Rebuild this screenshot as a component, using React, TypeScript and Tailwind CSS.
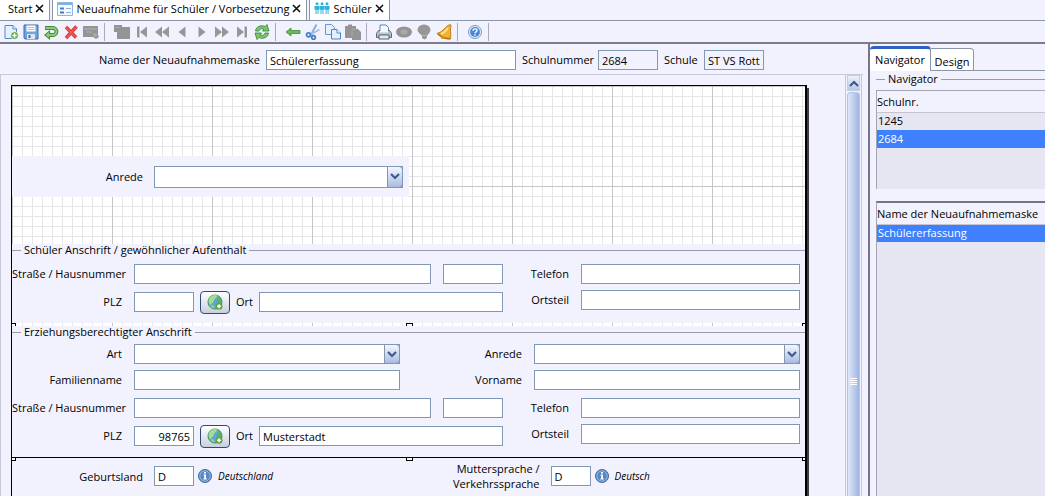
import { useState, type ReactNode } from 'react'

const fieldClass = 'min-w-0 border border-[#8098b4] px-[3px] text-black outline-none'

export default function App() {
  return (
    <div className="flex h-screen flex-col overflow-hidden bg-[#f2f2fe] font-['Open_Sans','Noto_Sans',sans-serif] text-[11px] leading-4 text-black">
      <WindowTabs />
      <Toolbar />
      <div className="flex min-h-0 flex-1">
        <main className="mr-[5px] flex min-w-0 flex-1 flex-col">
          <MaskHeader />
          <div className="flex min-h-0 flex-1 border-t border-l border-[#c9c9dc]">
            <div className="flex min-w-0 flex-1 overflow-hidden pt-[10px] pr-9 pl-[10px]">
              <MaskCanvas />
            </div>
            <ScrollBar />
          </div>
        </main>
        <SidePanel />
      </div>
    </div>
  )
}

function WindowTabs() {
  return (
    <nav className="flex h-[21px] shrink-0 gap-[2px] border-b border-[#8a96a8]">
      <WindowTab label="Start" />
      <WindowTab label="Neuaufnahme für Schüler / Vorbesetzung" icon={<FormIcon />} />
      <WindowTab label="Schüler" icon={<PeopleIcon />} />
    </nav>
  )
}

function WindowTab({ label, icon }: { label: string; icon?: ReactNode }) {
  return (
    <div
      className={`flex items-center gap-[3px] border-r border-[#8a96a8] bg-white pr-[5px] pb-[3px] ${
        icon ? 'border-l pl-1' : 'pl-2'
      }`}
    >
      {icon}
      <button type="button" className="whitespace-nowrap">
        {label}
      </button>
      <button type="button" aria-label={`${label} schließen`}>
        <svg width="9" height="9" viewBox="0 0 9 9" stroke="#111" strokeWidth="1.6">
          <path d="M1 1L8 8M8 1L1 8" />
        </svg>
      </button>
    </div>
  )
}

function Toolbar() {
  return (
    <div className="flex h-[23px] shrink-0 items-center border-b-2 border-[#7c7c8c] pl-px">
      <Tool label="Neu">
        <path d="M2 1.5h8l3.5 3.5v9.500h-11.500z" fill="#e4f1fd" stroke="#4a8ac9" />
        <path d="M10 1.500v3.500h3.500" fill="#fff" stroke="#4a8ac9" />
        <circle cx="11.500" cy="11.500" r="3.800" fill="#5da545" stroke="#fff" strokeWidth=".6" />
        <path d="M11.500 9.300v4.400M9.300 11.500h4.400" stroke="#fff" strokeWidth="1.500" />
      </Tool>
      <Tool label="Speichern">
        <path d="M1 1h14v14h-13l-1-1z" fill="#6fa3e0" stroke="#3a6dae" />
        <path d="M3.500 1.500h9v6h-9z" fill="#fff" />
        <path d="M4.500 3.500h7M4.500 5.500h7" stroke="#a8c2e3" />
        <path d="M4 10h8v5h-8z" fill="#dbe6f3" />
        <path d="M5.500 11h2v3h-2z" fill="#3a6dae" />
      </Tool>
      <Tool label="Rückgängig">
        <path d="M2 4h8a3.300 3.300 0 010 7H6" fill="none" stroke="#3d8c38" strokeWidth="3.800" />
        <path d="M7 6v10L1 11z" fill="#3d8c38" />
        <path d="M2.600 4H10a3.300 3.300 0 010 7H5" fill="none" stroke="#8ccb78" strokeWidth="2" />
        <path d="M6 8v6L2.500 11z" fill="#8ccb78" />
      </Tool>
      <Tool label="Löschen">
        <path d="M3 3L13 13.500M13.500 2.500L3 14" stroke="#d63333" strokeWidth="3.400" />
        <path d="M3 3L13 13.500M13.500 2.500L3 14" stroke="#f05a55" strokeWidth="1.800" />
      </Tool>
      <Tool label="Bearbeiten" disabled>
        <path d="M0 2h15v9l1 2-3 2-3-2H0z" fill="#949494" />
        <path d="M1 5h13M3 8h6" stroke="#b5b5b5" />
        <circle cx="12" cy="11" r="2" fill="#a9a9a9" />
      </Tool>
      <ToolSeparator />
      <Tool label="Auswahl" disabled>
        <path d="M0 1h8v2h8v12H3V8H0z" fill="#949494" />
        <path d="M1 3.500h5" stroke="#a8a8a8" />
      </Tool>
      <Tool label="Erster" disabled>
        <path d="M3 2.500h2.500v11H3zM13 2.500v11L6 8z" fill="#979797" />
      </Tool>
      <Tool label="Seite zurück" disabled>
        <path d="M8 2.500v11L1 8zM15 2.500v11L8 8z" fill="#979797" />
      </Tool>
      <Tool label="Zurück" disabled>
        <path d="M11.500 2.500v11L4.500 8z" fill="#979797" />
      </Tool>
      <Tool label="Weiter" disabled>
        <path d="M4.500 2.500v11L11.500 8z" fill="#979797" />
      </Tool>
      <Tool label="Seite weiter" disabled>
        <path d="M1 2.500v11L8 8zM8 2.500v11L15 8z" fill="#979797" />
      </Tool>
      <Tool label="Letzter" disabled>
        <path d="M10.500 2.500H13v11h-2.500zM3 2.500v11L10 8z" fill="#979797" />
      </Tool>
      <Tool label="Aktualisieren">
        <path d="M1.500 7C2 2.500 7 .5 11 2.500L13 .5l2 6.500H8.500L10 5C7.500 4 5.500 5 5 7z" fill="#7cc46a" stroke="#33803a" strokeWidth=".8" />
        <path d="M14.500 9c-.5 4.500-5.500 6.500-9.500 4.500L3 15.500 1 9h6.500L6 11c2.500 1 4.500 0 5-2z" fill="#7cc46a" stroke="#33803a" strokeWidth=".8" />
      </Tool>
      <ToolSeparator />
      <Tool label="Verschieben">
        <path d="M1 8l5-4v2.500h9v3H6V12z" fill="#6cb95c" stroke="#3d8c38" strokeWidth=".8" />
      </Tool>
      <Tool label="Ausschneiden">
        <path d="M11.500 .5L6.500 10" stroke="#8fb0d4" strokeWidth="2" />
        <path d="M14.500 5.500L5 11" stroke="#a9c0da" strokeWidth="2" />
        <circle cx="3.500" cy="10.800" r="2" fill="none" stroke="#3f7fcf" strokeWidth="1.800" />
        <circle cx="8.500" cy="13.500" r="1.800" fill="none" stroke="#3f7fcf" strokeWidth="1.800" />
      </Tool>
      <Tool label="Kopieren">
        <path d="M.5 .5h6l3 3v7h-9z" fill="#e4f0fc" stroke="#6698cf" />
        <path d="M6.500 5.500h5.500l3.500 3.500v6h-9z" fill="#e4f0fc" stroke="#4a86c6" />
        <path d="M12 5.500v3.500h3.500" fill="#fff" stroke="#4a86c6" />
      </Tool>
      <Tool label="Einfügen" disabled>
        <path d="M0 2h3V.500h4V2h4v3h2l3 3v8H7v-2H0z" fill="#949494" />
        <path d="M7 13V5h5" stroke="#a9a9a9" fill="none" />
      </Tool>
      <ToolSeparator />
      <Tool label="Drucken">
        <path d="M4 1h6l2.500 2.500V8H4z" fill="#f4f9ff" stroke="#5b87b5" />
        <path d="M2.500 6.500h11l2 3v4H.500v-4z" fill="#b9c0c9" stroke="#5b6470" />
        <path d="M4.500 5.500h7.500v3h-8z" fill="#f4f9ff" />
        <path d="M3 11h10v4H3z" fill="#e1ecf8" stroke="#5b6470" />
      </Tool>
      <Tool label="Vorschau" disabled>
        <ellipse cx="8" cy="8" rx="8" ry="5.500" fill="#949494" />
        <ellipse cx="8" cy="8" rx="3.500" ry="2.500" fill="#a9a9a9" />
      </Tool>
      <Tool label="Hinweis" disabled>
        <path d="M8 .500a6.500 5.500 0 016.500 5.500c0 2.500-2.500 4-3.500 6v2L8.500 15.500 6 14v-2C5 10 1.500 8.500 1.500 6A6.500 5.500 0 018 .500z" fill="#979797" />
        <path d="M6 11.500h4.500" stroke="#b5b5b5" />
      </Tool>
      <Tool label="Erinnerung">
        <path d="M12 1.500l2.500-1 .5 2c-1.500 3 .5 7-.5 12.500C10 15.500 4 13 1 9.500 6 8.500 8.500 4 12 1.500z" fill="#f2b233" stroke="#c07d14" />
        <path d="M2 9.800c3 3 8 5 12 4.700" stroke="#b8741a" strokeWidth="1.500" fill="none" />
        <path d="M12 4C10 7 8 9 5 10" stroke="#fde59a" strokeWidth="1.500" fill="none" />
        <circle cx="6.500" cy="13.500" r="1.500" fill="#d8901f" />
      </Tool>
      <ToolSeparator />
      <Tool label="Hilfe">
        <circle cx="8" cy="8" r="6.500" fill="#e5effa" stroke="#6f9bd1" />
        <circle cx="8" cy="8" r="4.900" fill="#4b86cf" />
        <path d="M6 6.800c0-2.600 4-2.400 4-.2 0 1.400-2 1.300-2 2.700" fill="none" stroke="#fff" strokeWidth="1.400" />
        <path d="M7.300 10.300h1.400v1.400H7.300z" fill="#fff" />
      </Tool>
      <ToolSeparator />
    </div>
  )
}

function Tool({ label, disabled, children }: { label: string; disabled?: boolean; children: ReactNode }) {
  return (
    <button type="button" aria-label={label} disabled={disabled} className="flex w-5 justify-center">
      <svg width="16" height="16" viewBox="0 0 16 16">
        {children}
      </svg>
    </button>
  )
}

function ToolSeparator() {
  return <span className="mr-[7px] ml-[3px] h-[18px] w-px bg-[#a9a9bb]" />
}

function MaskHeader() {
  return (
    <div className="flex h-[30px] shrink-0 items-center gap-[6px] pt-[2px] pr-[99px]">
      <label htmlFor="maskName" className="w-[260px] text-right">
        Name der Neuaufnahmemaske
      </label>
      <input id="maskName" className={`${fieldClass} h-5 flex-1 bg-white`} defaultValue="Schülererfassung" />
      <label htmlFor="schoolNo" className="w-[70px]">
        Schulnummer
      </label>
      <input id="schoolNo" className={`${fieldClass} h-5 w-[60px]`} value="2684" readOnly />
      <label htmlFor="school" className="w-[34px]">
        Schule
      </label>
      <input id="school" className={`${fieldClass} h-5 w-[60px]`} value="ST VS Rottal" readOnly />
    </div>
  )
}

function MaskCanvas() {
  return (
    <div className="flex min-w-0 flex-1">
      <div className="flex min-w-0 flex-1 flex-col border border-r-2 border-b-0 border-black bg-white bg-[linear-gradient(to_right,#c6c6c6_1px,transparent_1px),linear-gradient(to_bottom,#c6c6c6_1px,transparent_1px),linear-gradient(to_right,#e6e6e6_1px,transparent_1px),linear-gradient(to_bottom,#e6e6e6_1px,transparent_1px)] bg-[size:100px_100px,100px_100px,10px_10px,10px_10px] pt-[70px]">
        <div className="mb-[47px] flex h-[41px] w-1/2 shrink-0 items-center gap-[11px] bg-[#f2f2fe] pr-[6px]">
          <label htmlFor="salutation" className="w-[131px] text-right">
            Anrede
          </label>
          <Combo id="salutation" tall />
        </div>

        <Group title="Schüler Anschrift / gewöhnlicher Aufenthalt">
          <AddressFields prefix="student" />
        </Group>
        <Handles />
        <Group title="Erziehungsberechtigter Anschrift">
          <div className="mb-[6px] flex flex-col gap-[6px]">
            <div className="flex items-center">
              <div className="flex min-w-0 flex-1 items-center gap-3">
                <RowLabel id="kind">Art</RowLabel>
                <Combo id="kind" />
              </div>
              <div className="flex w-[400px] items-center gap-3">
                <label htmlFor="guardianSalutation" className="w-[122px] text-right">
                  Anrede
                </label>
                <Combo id="guardianSalutation" />
              </div>
            </div>
            <div className="flex items-center">
              <div className="flex min-w-0 flex-1 items-center gap-3">
                <RowLabel id="lastName">Familienname</RowLabel>
                <input id="lastName" className={`${fieldClass} h-5 flex-1 bg-white`} />
              </div>
              <div className="flex w-[400px] items-center gap-3">
                <label htmlFor="firstName" className="w-[122px] text-right">
                  Vorname
                </label>
                <input id="firstName" className={`${fieldClass} h-5 flex-1 bg-white`} />
              </div>
            </div>
          </div>
          <AddressFields prefix="guardian" zip="98765" city="Musterstadt" />
        </Group>

        <div className="flex-1 border-t border-black bg-[#f2f2fe]">
          <Handles flipped />
          <div className="flex h-[30px] items-center">
            <CodeField id="birthCountry" label="Geburtsland" code="D" text="Deutschland" />
            <CodeField id="language" label="Muttersprache / Verkehrssprache" code="D" text="Deutsch" />
          </div>
        </div>
      </div>
      <div className="mt-[3px] w-[2px] bg-[#3c3c44]" />
    </div>
  )
}

// selection handles along the edge of a placed group
function Handles({ flipped }: { flipped?: boolean }) {
  const edge = flipped ? 'border-b' : 'border-t'
  return (
    <div className="flex h-[3px] shrink-0 items-start justify-between">
      <span className={`h-[3px] w-1 border-r border-black bg-white ${edge}`} />
      <span className={`h-[3px] w-[7px] border-x border-black bg-white ${edge}`} />
      <span className={`h-[3px] w-[3px] border-l border-black bg-white ${edge}`} />
    </div>
  )
}

function Group({ title, children }: { title: string; children: ReactNode }) {
  return (
    <section className="shrink-0 bg-[#f2f2fe] pr-[5px] pb-[11px]">
      <GroupTitle title={title} />
      {children}
    </section>
  )
}

function GroupTitle({ title }: { title: string }) {
  return (
    <div className="-mr-[5px] mb-[6px] flex h-3 items-center gap-[3px]">
      <span className="h-px w-[9px] bg-[#9a9aaa]" />
      <h2 className="whitespace-nowrap">{title}</h2>
      <span className="h-px flex-1 bg-[#9a9aaa]" />
    </div>
  )
}

function RowLabel({ id, children }: { id: string; children: ReactNode }) {
  return (
    <label htmlFor={id} className="w-[110px] text-right whitespace-nowrap">
      {children}
    </label>
  )
}

function AddressFields({ prefix, zip = '', city = '' }: { prefix: string; zip?: string; city?: string }) {
  return (
    <div className="flex items-start pt-[2px]">
      <div className="flex min-w-0 flex-1 flex-col gap-2">
        <div className="flex h-5 items-center gap-3">
          <RowLabel id={`${prefix}-street`}>Straße / Hausnummer</RowLabel>
          <input id={`${prefix}-street`} className={`${fieldClass} h-5 flex-1 bg-white`} />
          <input aria-label="Hausnummer" className={`${fieldClass} h-5 w-[60px] bg-white`} />
        </div>
        <div className="flex h-5 items-center gap-[6px]">
          <RowLabel id={`${prefix}-zip`}>PLZ</RowLabel>
          <input
            id={`${prefix}-zip`}
            className={`${fieldClass} ml-[6px] h-5 w-[60px] bg-white text-right`}
            defaultValue={zip}
          />
          <button
            type="button"
            aria-label="PLZ suchen"
            className="flex h-[23px] w-[30px] items-center justify-center rounded-sm border border-[#2f4a7a] bg-linear-to-b from-white to-[#c9cfe0]"
          >
            <GlobeIcon />
          </button>
          <label htmlFor={`${prefix}-city`} className="w-[17px]">
            Ort
          </label>
          <input id={`${prefix}-city`} className={`${fieldClass} h-5 flex-1 bg-white`} defaultValue={city} />
        </div>
      </div>
      <div className="flex w-[297px] flex-col gap-[6px]">
        <div className="flex items-center gap-3">
          <label htmlFor={`${prefix}-phone`} className="w-[66px] text-right">
            Telefon
          </label>
          <input id={`${prefix}-phone`} className={`${fieldClass} h-5 flex-1 bg-white`} />
        </div>
        <div className="flex items-center gap-3">
          <label htmlFor={`${prefix}-district`} className="w-[66px] text-right">
            Ortsteil
          </label>
          <input id={`${prefix}-district`} className={`${fieldClass} h-5 flex-1 bg-white`} />
        </div>
      </div>
    </div>
  )
}

function CodeField({ id, label, code, text }: { id: string; label: string; code: string; text: string }) {
  return (
    <div className="flex w-1/2 items-center">
      <label htmlFor={id} className="mr-[11px] w-[131px] pl-8 text-right leading-[15px]">
        {label}
      </label>
      <input id={id} className={`${fieldClass} h-5 w-10 bg-white`} defaultValue={code} />
      <svg width="14" height="14" viewBox="0 0 14 14" className="mr-[6px] ml-1">
        <circle cx="7" cy="7" r="6.500" fill="#5588c4" stroke="#45699a" />
        <circle cx="7" cy="7" r="5.200" fill="none" stroke="#a9c6e8" strokeWidth=".8" />
        <path d="M6 3h2v1.600H6zM5.500 5.600H8v4h.8v1H5.300v-1H6.200v-3h-.7z" fill="#fff" />
      </svg>
      <em className="text-[10px]">{text}</em>
    </div>
  )
}

function Combo({ id, tall }: { id: string; tall?: boolean }) {
  return (
    <div className="relative flex min-w-0 flex-1">
      <select id={id} className={`${fieldClass} flex-1 appearance-none bg-white ${tall ? 'h-[22px]' : 'h-5'}`}>
        <option value="" />
      </select>
      <span className="pointer-events-none absolute inset-y-0 right-0 flex w-4 items-center justify-center rounded-r-sm border border-[#8098b4] bg-linear-to-b from-[#f4f7fd] to-[#a9bce0]">
        <svg width="10" height="7" viewBox="0 0 10 7" fill="none" stroke="#3f5a8c" strokeWidth="2.200">
          <path d="M1 1l4 4 4-4" />
        </svg>
      </span>
    </div>
  )
}

function ScrollBar() {
  return (
    <div className="mr-px flex w-[17px] shrink-0 flex-col border-x border-[#c3c9dd] bg-[#f2f2fe] px-px">
      <button
        type="button"
        aria-label="Nach oben"
        className="flex h-4 shrink-0 items-center justify-center border border-[#c3cde4] bg-linear-to-b from-[#eef2fb] to-[#b9c8e6]"
      >
        <svg width="10" height="7" viewBox="0 0 10 7" fill="none" stroke="#3f5a8c" strokeWidth="2.200">
          <path d="M1 6l4-4 4 4" />
        </svg>
      </button>
      <div className="mt-px flex flex-1 flex-col items-center rounded-t-sm border border-b-0 border-[#b4c3e6] bg-linear-to-r from-[#dfe7f9] to-[#9fb5e3]">
        <span className="flex-[72]" />
        <span className="flex flex-col gap-px">
          <span className="h-px w-[7px] bg-white" />
          <span className="h-px w-[7px] bg-white" />
          <span className="h-px w-[7px] bg-white" />
          <span className="h-px w-[7px] bg-white" />
        </span>
        <span className="flex-[28]" />
      </div>
    </div>
  )
}

function SidePanel() {
  return (
    <aside className="flex w-[177px] shrink-0 flex-col border-l-2 border-[#74748a] pt-[2px]">
      <div role="tablist" className="flex h-[25px] items-end">
        <button
          type="button"
          role="tab"
          aria-selected="true"
          className="h-[25px] w-[61px] rounded-t-sm border-t-[3px] border-r border-t-[#2f62c0] border-r-[#8a96a8] bg-white text-center"
        >
          Navigator
        </button>
        <button
          type="button"
          role="tab"
          aria-selected="false"
          className="h-[23px] w-[43px] rounded-tr-sm border-t border-r border-b border-[#8a96a8] bg-white pt-1"
        >
          Design
        </button>
        <span className="flex-1 self-stretch border-b border-[#8a96a8]" />
      </div>
      <div className="flex min-h-0 flex-1 flex-col pt-[2px] pl-[6px]">
        <div className="mb-[5px] flex h-3 items-center gap-[3px]">
          <span className="h-px w-[9px] bg-[#9a9aaa]" />
          <h2>Navigator</h2>
          <span className="h-px flex-1 bg-[#9a9aaa]" />
        </div>
        <div className="h-[99px] border-t border-l border-[#a4a4b4] bg-[#e6e6f2]">
          <SelectTable title="Schulnr." rows={['1245', '2684']} initial="2684" />
        </div>
        <div className="mt-3 flex-1 border-t-2 border-l border-t-[#74748a] border-l-[#a4a4b4] bg-[#e6e6f2]">
          <SelectTable title="Name der Neuaufnahmemaske" rows={['Schülererfassung']} initial="Schülererfassung" />
        </div>
      </div>
    </aside>
  )
}

function SelectTable({ title, rows, initial }: { title: string; rows: string[]; initial: string }) {
  const [selected, setSelected] = useState(initial)

  return (
    <table className="w-full border-collapse text-left">
      <thead>
        <tr className="h-[21px] border-b border-[#c4c4d2] bg-[#f2f2fe]">
          <th className="p-0 pt-[2px] font-normal whitespace-nowrap">{title}</th>
        </tr>
      </thead>
      <tbody>
        {rows.map((row) => (
          <tr
            key={row}
            onClick={() => setSelected(row)}
            className={`h-[18px] ${row === selected ? 'bg-[#3f80ff] text-white' : ''}`}
          >
            <td className="p-0 pl-px">{row}</td>
          </tr>
        ))}
      </tbody>
    </table>
  )
}

function FormIcon() {
  return (
    <svg width="16" height="14" viewBox="0 0 16 14">
      <path d="M.500.500h15v13H.500z" fill="#f4f9ff" stroke="#8fb4e0" />
      <path d="M1 1h14v2H1z" fill="#7fb0e8" />
      <path d="M3 5.500h4v2H3zM3 9.500h4v2H3z" fill="#4a7dbd" />
      <path d="M9 6.500h5M9 10.500h5" stroke="#8fb0d8" />
    </svg>
  )
}

function PeopleIcon() {
  return (
    <svg width="16" height="13" viewBox="0 0 16 13" fill="#2fb4d8">
      <circle cx="3" cy="1.800" r="1.500" />
      <circle cx="8" cy="1.800" r="1.500" />
      <circle cx="13" cy="1.800" r="1.500" />
      <path d="M.500 4h5v3.500H4.500V12h-1V8h-1v4h-1V7.500h-1zM5.800 4h4.500v3.500h-.8V12h-1V8h-1v4h-1V7.500h-.7zM10.600 4h5v3.500h-1V12h-1V8h-1v4h-1V7.500h-1z" />
    </svg>
  )
}

function GlobeIcon() {
  return (
    <svg width="17" height="17" viewBox="0 0 17 17">
      <circle cx="8" cy="8" r="7" fill="#5da6dc" stroke="#3f9150" />
      <path d="M2 5c2-4 6-4.500 8-3.500C10 4 7.500 4 7 6.500S4 9 3.500 11C1.500 9.500 1.200 7 2 5z" fill="#a5dc90" />
      <path d="M3 12c2-2 4-1 5 2-2 .5-4-.5-5-2z" fill="#8fd07a" />
      <path d="M11 4c2 0 3.500 1.500 3.500 4l-3 2-2-2.500z" fill="#5cb356" />
      <circle cx="12" cy="12.300" r="3.500" fill="#5da545" />
      <path d="M12 10.300v4M10 12.300h4" stroke="#fff" strokeWidth="1.500" />
    </svg>
  )
}
